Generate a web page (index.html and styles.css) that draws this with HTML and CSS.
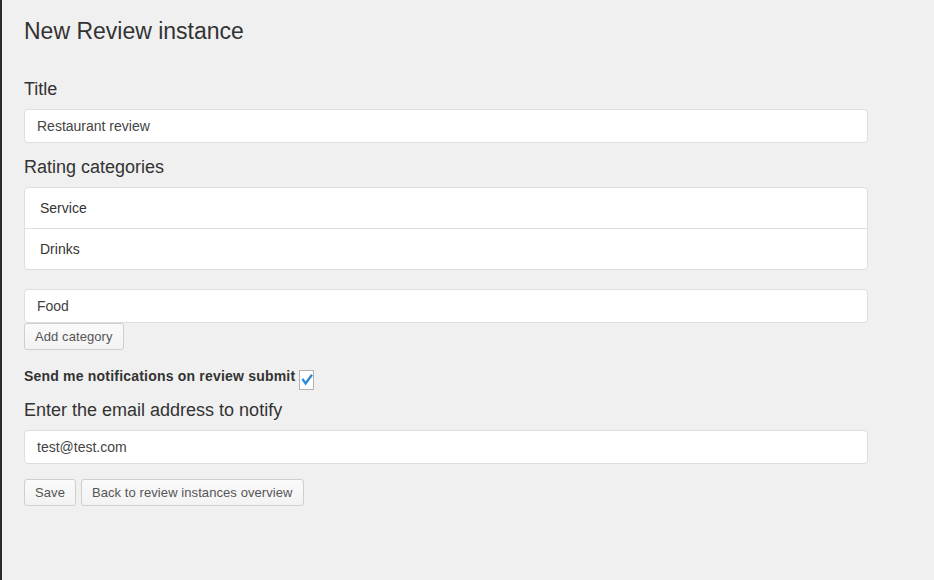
FILE: index.html
```html
<!DOCTYPE html>
<html>
<head>
<meta charset="utf-8">
<title>New Review instance</title>
<link rel="stylesheet" href="styles.css">
</head>
<body>
<div class="page">
  <h1 class="page-title">New Review instance</h1>
  <form class="form">
    <label class="field-label" for="title">Title</label>
    <input class="field-input" id="title" type="text" value="Restaurant review">

    <label class="field-label label-gap">Rating categories</label>
    <ul class="list-group">
      <li class="list-item">Service</li>
      <li class="list-item">Drinks</li>
    </ul>

    <input class="field-input category-input" type="text" value="Food">
    <button type="button" class="btn">Add category</button>

    <div class="check-row">
      <span class="check-label">Send me notifications on review submit</span>
      <span class="check-box">
        <svg width="15" height="20" viewBox="0 0 15 20"><path d="M3.4 8.9 L6.6 13.4 L13 4.8" fill="none" stroke="#2f8ad5" stroke-width="2.4" stroke-linecap="butt" stroke-linejoin="miter"/></svg>
      </span>
    </div>

    <label class="field-label email-label" for="email">Enter the email address to notify</label>
    <input class="field-input" id="email" type="text" value="test@test.com">

    <div class="actions">
      <button type="button" class="btn">Save</button>
      <button type="button" class="btn">Back to review instances overview</button>
    </div>
  </form>
</div>
</body>
</html>
```

FILE: styles.css
```css
* {
  box-sizing: border-box;
}

html, body {
  margin: 0;
  padding: 0;
  background: #f0f0f0;
}

body {
  font-family: "Liberation Sans", Arial, sans-serif;
  font-size: 14px;
  color: #333;
}

.page {
  min-height: 580px;
  border-left: 2px solid #2b2b2b;
  padding: 18px 0 0 22px;
}

.page-title {
  margin: 0 0 35px;
  font-size: 23px;
  line-height: 26px;
  font-weight: normal;
  color: #333;
}

.form {
  width: 844px;
}

.field-label {
  display: block;
  font-size: 18px;
  line-height: 20px;
  font-weight: normal;
  color: #333;
  margin: 0 0 10px;
}

.label-gap {
  margin-top: 14px;
}

.field-input {
  display: block;
  width: 100%;
  height: 34px;
  padding: 6px 12px;
  font-family: "Liberation Sans", Arial, sans-serif;
  font-size: 14px;
  line-height: 20px;
  color: #444;
  background: #fff;
  border: 1px solid #dedede;
  border-radius: 4px;
  outline: none;
}

.list-group {
  list-style: none;
  margin: 0;
  padding: 0;
}

.list-item {
  background: #fff;
  border: 1px solid #dedede;
  margin-bottom: -1px;
  padding: 10px 15px;
  line-height: 20px;
  color: #333;
}

.list-item:first-child {
  border-radius: 4px 4px 0 0;
}

.list-item:last-child {
  border-radius: 0 0 4px 4px;
  margin-bottom: 0;
}

.category-input {
  margin-top: 19px;
}

.btn {
  display: inline-block;
  font-family: "Liberation Sans", Arial, sans-serif;
  font-size: 13px;
  line-height: 17px;
  letter-spacing: 0.08px;
  padding: 4px 10px;
  color: #555;
  background: linear-gradient(#fafafa, #f3f3f3);
  border: 1px solid #cfcfcf;
  border-radius: 3px;
  cursor: pointer;
}

.check-row {
  display: flex;
  align-items: flex-start;
  margin-top: 16px;
}

.check-label {
  font-weight: bold;
  font-size: 14px;
  line-height: 20px;
  letter-spacing: 0.2px;
  color: #333;
}

.check-box {
  display: block;
  width: 15px;
  height: 20px;
  margin: 4px 0 0 4px;
  position: relative;
  background: #fff;
}

.check-box::after {
  content: "";
  position: absolute;
  inset: 0;
  border: 1px solid #b4b4b4;
}

.check-box svg {
  display: block;
}

.email-label {
  margin-top: 10px;
}

.actions {
  display: flex;
  gap: 5px;
  margin-top: 15px;
}
```
